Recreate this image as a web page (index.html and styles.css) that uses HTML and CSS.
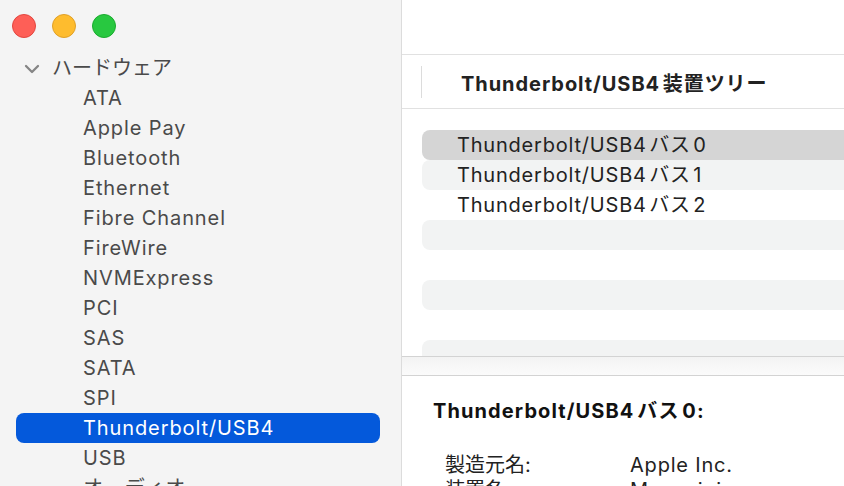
FILE: index.html
```html
<!DOCTYPE html>
<html lang="ja">
<head>
<meta charset="utf-8">
<title>システム情報</title>
<link rel="stylesheet" href="styles.css">
</head>
<body>
<div class="window">
  <aside class="sidebar">
    <div class="lights">
      <span class="light red"></span>
      <span class="light yellow"></span>
      <span class="light green"></span>
    </div>
    <ul class="tree">
      <li class="group">
        <svg class="chev" width="16" height="10" viewBox="0 0 16 10"><path d="M2 2 L8 8 L14 2" fill="none" stroke="#858585" stroke-width="2.3" stroke-linecap="round" stroke-linejoin="round"/></svg>
        <span>ハードウェア</span>
      </li>
      <li class="item">ATA</li>
      <li class="item">Apple Pay</li>
      <li class="item">Bluetooth</li>
      <li class="item">Ethernet</li>
      <li class="item">Fibre Channel</li>
      <li class="item">FireWire</li>
      <li class="item">NVMExpress</li>
      <li class="item">PCI</li>
      <li class="item">SAS</li>
      <li class="item">SATA</li>
      <li class="item">SPI</li>
      <li class="item selected">Thunderbolt/USB4</li>
      <li class="item">USB</li>
      <li class="item">オーディオ</li>
    </ul>
  </aside>
  <main class="content">
    <div class="toolbar"></div>
    <div class="colhead">
      <span class="colsep"></span>
      <span class="coltitle">Thunderbolt/USB4 装置ツリー</span>
    </div>
    <div class="table">
      <div class="row sel">Thunderbolt/USB4 バス 0</div>
      <div class="row alt">Thunderbolt/USB4 バス 1</div>
      <div class="row">Thunderbolt/USB4 バス 2</div>
      <div class="row alt"></div>
      <div class="row"></div>
      <div class="row alt"></div>
      <div class="row"></div>
      <div class="row alt"></div>
    </div>
    <div class="splitter"></div>
    <section class="detail">
      <h2 class="dtitle">Thunderbolt/USB4 バス 0:</h2>
      <dl class="props">
        <dt>製造元名:</dt><dd>Apple Inc.</dd>
        <dt>装置名:</dt><dd>Mac mini</dd>
      </dl>
    </section>
  </main>
</div>
</body>
</html>
```
FILE: styles.css
```css
* { box-sizing: border-box; }
html, body { margin: 0; padding: 0; }
body {
  width: 844px;
  height: 486px;
  overflow: hidden;
  font-family: Inter, "Noto Sans CJK JP", sans-serif;
  -webkit-font-smoothing: antialiased;
}
.window {
  display: flex;
  width: 844px;
  height: 486px;
}
.sidebar {
  width: 402px;
  flex: none;
  background: #f4f4f4;
  border-right: 1px solid #dcdcdc;
  overflow: hidden;
}
.lights {
  display: flex;
  gap: 16px;
  padding: 14px 0 0 12px;
  height: 38px;
}
.light {
  width: 24px;
  height: 24px;
  border-radius: 50%;
}
.red { background: #fe5f57; border: 1px solid #e2463f; }
.yellow { background: #febc2e; border: 1px solid #e0a027; }
.green { background: #28c840; border: 1px solid #1aab2e; }
.tree {
  list-style: none;
  margin: 15px 0 0 0;
  padding: 0;
}
.tree li {
  height: 30px;
  line-height: 30px;
  font-size: 20px;
  color: #4a4a4a;
  white-space: nowrap;
}
.group {
  display: flex;
  align-items: center;
  padding-left: 24px;
}
.chev { margin-right: 12px; margin-top: 1px; }
.item {
  margin: 0 21px 0 16px;
  padding-left: 67px;
  border-radius: 8px;
  letter-spacing: 0.9px;
}
.item.selected {
  background: #0459db;
  color: #ffffff;
}
.content {
  flex: 1;
  display: flex;
  flex-direction: column;
  background: #ffffff;
  min-width: 0;
}
.toolbar {
  height: 55px;
  flex: none;
  border-bottom: 1px solid #e1e1e1;
}
.colhead {
  height: 54px;
  flex: none;
  border-bottom: 1px solid #e1e1e1;
  display: flex;
  align-items: center;
}
.colsep {
  width: 1px;
  height: 32px;
  background: #dcdcdc;
  margin-left: 19px;
}
.coltitle {
  margin-left: 39px;
  font-size: 20px;
  font-weight: 700;
  letter-spacing: 0.95px;
  word-spacing: -3px;
  color: #222222;
  margin-top: 1px;
}
.table {
  height: 247px;
  flex: none;
  padding-top: 21px;
  overflow: hidden;
}
.row {
  height: 30px;
  line-height: 30px;
  margin-left: 20px;
  padding-left: 35px;
  font-size: 20px;
  letter-spacing: 0.8px;
  word-spacing: -4px;
  color: #222222;
  border-radius: 8px 0 0 8px;
  white-space: nowrap;
}
.row.alt { background: #f2f3f3; }
.row.sel { background: #d5d5d5; }
.splitter {
  height: 20px;
  flex: none;
  border-top: 1px solid #d3d3d3;
  border-bottom: 1px solid #d3d3d3;
  background: linear-gradient(#f3f3f3, #fbfbfb);
}
.detail {
  flex: 1;
  padding: 23px 0 0 31px;
}
.dtitle {
  margin: 0;
  font-size: 20px;
  line-height: 24px;
  font-weight: 700;
  letter-spacing: 1.1px;
  word-spacing: -3px;
  color: #111111;
}
.props {
  display: grid;
  grid-template-columns: 185px auto;
  margin: 30px 0 0 12px;
  font-size: 20px;
  line-height: 25px;
  color: #222222;
}
.props dd { letter-spacing: 0.8px; }
.props dt, .props dd { margin: 0; }
```
